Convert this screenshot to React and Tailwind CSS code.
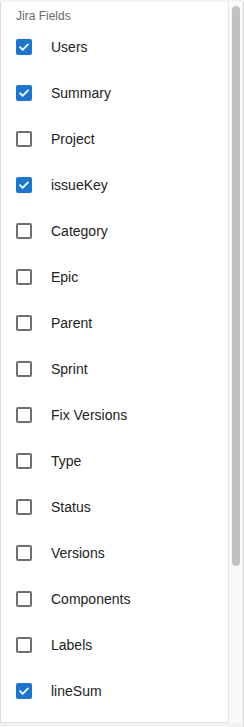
const fields = [
  { name: 'Users', on: true },
  { name: 'Summary', on: true },
  { name: 'Project', on: false },
  { name: 'issueKey', on: true },
  { name: 'Category', on: false },
  { name: 'Epic', on: false },
  { name: 'Parent', on: false },
  { name: 'Sprint', on: false },
  { name: 'Fix Versions', on: false },
  { name: 'Type', on: false },
  { name: 'Status', on: false },
  { name: 'Versions', on: false },
  { name: 'Components', on: false },
  { name: 'Labels', on: false },
  { name: 'lineSum', on: true },
]

function Box({ on }) {
  if (on) {
    return (
      <div className="w-[16px] h-[16px] rounded-[2px] bg-[#1976d2] flex items-center justify-center">
        <svg width="12" height="12" viewBox="0 0 12 12" fill="none">
          <path d="M2 6.2l2.6 2.6L10 3.4" stroke="white" strokeWidth="1.8" strokeLinecap="round" strokeLinejoin="round" />
        </svg>
      </div>
    )
  }
  return <div className="w-[16px] h-[16px] rounded-[2px] border-2 border-[#707070] bg-white" />
}

export default function App() {
  return (
    <div
      className="w-[244px] h-[727px] bg-[#f2f2f2] overflow-hidden pt-[2px] flex"
      style={{ fontFamily: '"Liberation Sans", Arial, sans-serif' }}
    >
      <div className="w-[242px] h-[721px] bg-white border-l border-[#dcdcdc] flex">
        {/* list */}
        <div className="flex-1 flex flex-col border-b border-[#e0e0e0]">
          <div className="pt-[6px] pl-[15px] text-[12px] leading-[16px] text-[#6b6b6b]">Jira Fields</div>
          {fields.map((f) => (
            <div key={f.name} className="h-[46px] flex items-center pl-[15px]">
              <Box on={f.on} />
              <span className="ml-[19px] text-[14px] text-[#222222]">{f.name}</span>
            </div>
          ))}
        </div>
        {/* scrollbar */}
        <div className="w-[14px] bg-[#fafafa] border-l border-[#e6e6e6] pt-[4px] pl-[3px]">
          <div className="w-[8px] h-[560px] rounded-full bg-[#c1c1c1]" />
        </div>
      </div>
      <div className="w-[2px] border-r border-[#d8d8d8]" />
    </div>
  )
}
